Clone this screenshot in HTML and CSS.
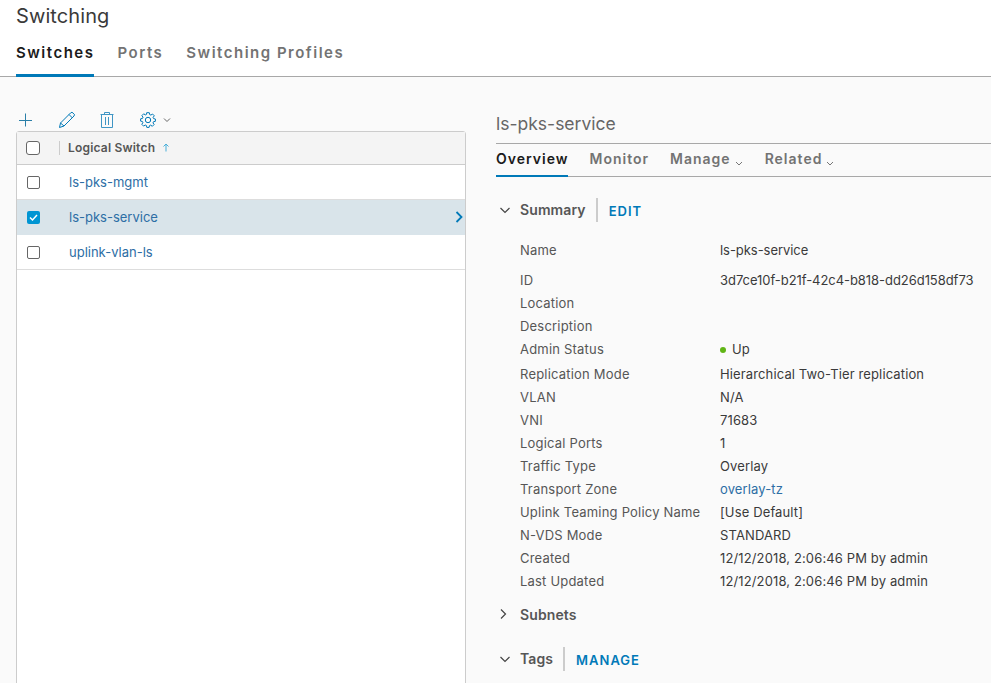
FILE: index.html
```html
<!DOCTYPE html>
<html lang="en">
<head>
<meta charset="utf-8">
<title>Switching</title>
<link rel="stylesheet" href="styles.css">
</head>
<body>
<header class="top">
  <h1 class="title">Switching</h1>
  <nav class="tabs">
    <a class="tab active">Switches</a>
    <a class="tab">Ports</a>
    <a class="tab">Switching Profiles</a>
  </nav>
</header>
<main class="main">
  <section class="left">
    <div class="toolbar">
      <svg class="ic ic-plus" width="16" height="16" viewBox="0 0 16 16"><path d="M8.500 1.500V14.500M2 8.500H15" fill="none" stroke="#2a7fa8" stroke-width="1"/></svg>
      <svg class="ic ic-pen" width="18" height="18" viewBox="0 0 18 18"><path d="M1.500 16.500L2.500 12 12.500 2 14 1.200 16.500 3.500 16 5 6 15ZM2.500 12L6 15M11 3.500L14.500 7" fill="none" stroke="#0079b8" stroke-width="1"/></svg>
      <svg class="ic ic-trash" width="14" height="17" viewBox="0 0 14 17"><path d="M.5 3.500H13.500M1.500 3.500V16.500H12.500V3.500M4.500 3V1.500H9.500V3M5.500 6V14M8.500 6V14" fill="none" stroke="#3f95c4" stroke-width="1"/></svg>
      <svg class="ic ic-gear" width="16" height="16" viewBox="0 0 16 16"><circle cx="8" cy="8" r="2.700" fill="none" stroke="#0079b8"/><path d="M6.700 .7H9.300L9.700 2.600 10.900 3.100 12.500 2 14.300 3.800 13.100 5.400 13.600 6.600 15.400 7V9.300L13.500 9.700 13 10.900 14.100 12.500 12.300 14.300 10.700 13.100 9.500 13.600 9.100 15.400H6.800L6.400 13.500 5.200 13 3.600 14.100 1.800 12.300 2.900 10.700 2.400 9.500 .6 9.100V6.800L2.500 6.400 3 5.200 1.900 3.600 3.700 1.800 5.300 2.900 6.500 2.400Z" fill="none" stroke="#0079b8"/></svg>
      <svg class="ic ic-caret" width="8" height="6" viewBox="0 0 8 6"><path d="M1 1.500L4 4.500 7 1.500" fill="none" stroke="#666" stroke-width="1"/></svg>
    </div>
    <div class="grid">
      <div class="grid-head">
        <span class="cb cb-head"></span>
        <span class="head-sep"></span>
        <span class="head-label">Logical Switch</span>
        <svg class="sort" width="8" height="9" viewBox="0 0 8 9"><path d="M4 8.500V1M1.500 3.500L4 1 6.500 3.500" fill="none" stroke="#49afd9" stroke-width="1"/></svg>
      </div>
      <div class="row"><span class="cb"></span><a class="link">ls-pks-mgmt</a></div>
      <div class="row selected">
        <span class="cb cb-on"><svg width="13" height="13" viewBox="0 0 13 13"><path d="M3 6.500L5.500 9 10 4" fill="none" stroke="#fff" stroke-width="1.500"/></svg></span>
        <a class="link">ls-pks-service</a>
        <svg class="row-arrow" width="8" height="12" viewBox="0 0 8 12"><path d="M1.500 1L6.500 6 1.500 11" fill="none" stroke="#0079b8" stroke-width="1.800"/></svg>
      </div>
      <div class="row"><span class="cb"></span><a class="link">uplink-vlan-ls</a></div>
    </div>
  </section>
  <section class="right">
    <h2 class="detail-title">ls-pks-service</h2>
    <nav class="subtabs">
      <a class="subtab active">Overview</a>
      <a class="subtab">Monitor</a>
      <a class="subtab">Manage<svg class="sub-caret" width="8" height="6" viewBox="0 0 8 6"><path d="M1 1L4 4 7 1" fill="none" stroke="#777"/></svg></a>
      <a class="subtab">Related<svg class="sub-caret" width="8" height="6" viewBox="0 0 8 6"><path d="M1 1L4 4 7 1" fill="none" stroke="#777"/></svg></a>
    </nav>
    <div class="sec sec-summary">
      <svg class="chev" width="10" height="7" viewBox="0 0 10 7"><path d="M.5 1L5 5.500 9.500 1" fill="none" stroke="#444" stroke-width="1.200"/></svg>
      <span class="sec-name">Summary</span><span class="sec-sep"></span><a class="action">EDIT</a>
    </div>
    <dl class="props">
      <div class="prop p-name"><dt>Name</dt><dd class="tight">ls-pks-service</dd></div>
      <div class="prop p-id"><dt>ID</dt><dd class="tight">3d7ce10f-b21f-42c4-b818-dd26d158df73</dd></div>
      <div class="prop"><dt>Location</dt><dd></dd></div>
      <div class="prop"><dt>Description</dt><dd></dd></div>
      <div class="prop p-admin"><dt>Admin Status</dt><dd><span class="dot"></span>Up</dd></div>
      <div class="prop"><dt>Replication Mode</dt><dd>Hierarchical Two-Tier replication</dd></div>
      <div class="prop"><dt>VLAN</dt><dd>N/A</dd></div>
      <div class="prop"><dt>VNI</dt><dd>71683</dd></div>
      <div class="prop"><dt>Logical Ports</dt><dd>1</dd></div>
      <div class="prop"><dt>Traffic Type</dt><dd>Overlay</dd></div>
      <div class="prop"><dt>Transport Zone</dt><dd><a class="link">overlay-tz</a></dd></div>
      <div class="prop"><dt>Uplink Teaming Policy Name</dt><dd>[Use Default]</dd></div>
      <div class="prop"><dt>N-VDS Mode</dt><dd>STANDARD</dd></div>
      <div class="prop"><dt>Created</dt><dd>12/12/2018, 2:06:46 PM by admin</dd></div>
      <div class="prop"><dt>Last Updated</dt><dd>12/12/2018, 2:06:46 PM by admin</dd></div>
    </dl>
    <div class="sec sec-subnets">
      <svg class="chev chev-r" width="7" height="10" viewBox="0 0 7 10"><path d="M1 .5L5.500 5 1 9.500" fill="none" stroke="#444" stroke-width="1.200"/></svg>
      <span class="sec-name sec-name-plain">Subnets</span>
    </div>
    <div class="sec sec-tags">
      <svg class="chev" width="10" height="7" viewBox="0 0 10 7"><path d="M.5 1L5 5.500 9.500 1" fill="none" stroke="#444" stroke-width="1.200"/></svg>
      <span class="sec-name">Tags</span><span class="sec-sep"></span><a class="action">MANAGE</a>
    </div>
  </section>
</main>
</body>
</html>
```
FILE: styles.css
```css
* { box-sizing: border-box; }
html, body { margin: 0; height: 683px; overflow: hidden; }
body { background: #fafafa; font-family: Inter, "Open Sans", sans-serif; font-size: 13px; color: #444; }
.top { height: 77px; background: #fff; border-bottom: 1px solid #a8a8a8; padding: 0 16px; }
.title { margin: 0; height: 33px; padding-top: 3px; font-size: 20px; line-height: 26px; font-weight: 400; letter-spacing: .1px; color: #3a3a3a; }
.tabs { display: flex; gap: 23px; height: 43px; }
.tab { height: 44px; padding-top: 10px; font-size: 15px; line-height: 20px; font-weight: 600; letter-spacing: 1.5px; color: #737373; }
.tab.active { color: #1b1b1b; border-bottom: 3px solid #0079b8; }
.main { display: flex; align-items: flex-start; padding: 0 0 0 16px; }
.left { width: 450px; flex: none; }
.toolbar { display: flex; align-items: center; height: 54px; padding-top: 31px; padding-left: 1px; }
.ic { flex: none; display: block; }
.ic-pen { margin-left: 25px; }
.ic-trash { margin-left: 24px; }
.ic-gear { margin-left: 26px; }
.ic-caret { margin-left: 7px; }
.grid { height: 560px; background: #fff; border: 1px solid #ccc; border-radius: 3px 3px 0 0; }
.grid-head { display: flex; align-items: center; height: 33px; background: #f4f4f4; border-bottom: 1px solid #ccc; padding-left: 9px; padding-bottom: 1px; }
.head-sep { width: 1px; height: 14px; background: #ccc; margin-left: 19px; }
.head-label { margin-left: 8px; font-size: 12px; font-weight: 600; letter-spacing: .2px; color: #565656; }
.sort { margin-left: 7px; }
.cb { flex: none; display: block; width: 13px; height: 13px; background: #fff; border: 1px solid #666; border-radius: 2px; }
.cb-head { width: 14px; height: 14px; border-radius: 3px; }
.cb-on { background: #0095d3; border: 0; }
.cb-on svg { display: block; }
.row { display: flex; align-items: center; height: 35px; padding-left: 10px; border-bottom: 1px solid #ddd; }
.row.selected { background: #d9e4ea; border-bottom-color: #d9e4ea; }
.row .link { margin-left: 29px; }
.link { color: #2d6ea5; font-size: 13px; }
.row-arrow { margin-left: auto; margin-right: 2px; }
.right { flex: 1; min-width: 0; margin-left: 30px; }
.detail-title { margin: 0; height: 66px; padding-top: 35px; font-size: 17.5px; line-height: 24px; font-weight: 400; color: #666; }
.subtabs { display: flex; gap: 21px; height: 34px; border-top: 1px solid #a8a8a8; border-bottom: 1px solid #a8a8a8; }
.subtab { height: 33px; padding-top: 6px; font-size: 14px; line-height: 18px; font-weight: 600; letter-spacing: 1px; color: #737373; }
.subtab.active { color: #1b1b1b; border-bottom: 2px solid #0079b8; }
.sub-caret { margin: 0 1px 0 4px; vertical-align: -3px; }
.sec { display: flex; align-items: center; padding-left: 4px; }
.sec-summary { margin-top: 20px; height: 26px; }
.sec-subnets { margin-top: 11px; height: 20px; }
.sec-tags { margin-top: 23px; height: 24px; }
.chev { flex: none; width: 10px; }
.chev-r { width: 7px; margin-right: 3px; }
.sec-name { margin: 0 0 2px 10px; font-size: 14px; font-weight: 600; letter-spacing: .1px; color: #565656; }
.sec-name-plain { margin-bottom: 0; }
.sec-sep { width: 2px; height: 24px; background: #ccc; margin-left: 10px; }
.action { margin: 2px 0 0 11px; font-size: 13px; font-weight: 600; letter-spacing: 1px; color: #0079b8; }
.props { margin: 16px 0 0 24px; }
.prop { display: flex; height: 23px; line-height: 23px; }
.p-name { height: 30px; }
.p-admin { height: 25px; }
.prop dt { width: 200px; flex: none; letter-spacing: .2px; color: #565656; }
.prop dd { margin: 0; letter-spacing: .13px; color: #3a3a3a; }
.prop dd.tight { letter-spacing: -.05px; }
.dot { display: inline-block; width: 6px; height: 6px; margin-right: 6px; border-radius: 50%; background: #60b515; vertical-align: 1px; }
```
